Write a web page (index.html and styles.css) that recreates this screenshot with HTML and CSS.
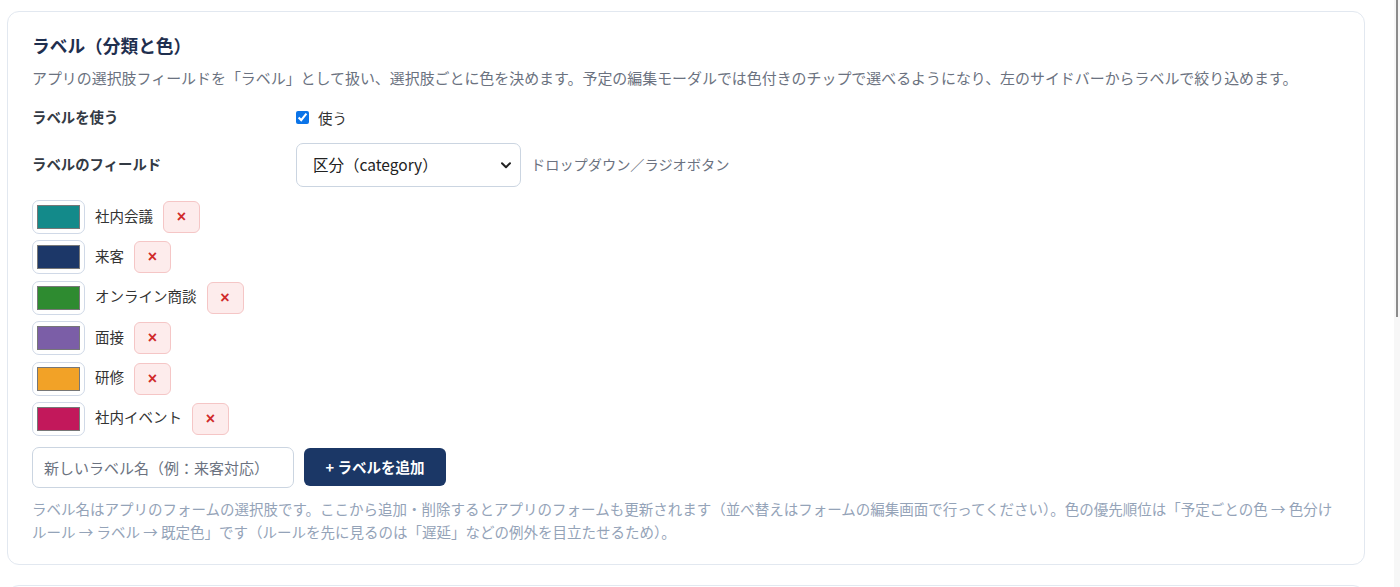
FILE: index.html
```html
<!DOCTYPE html>
<html lang="ja">
<head>
<meta charset="utf-8">
<title>ラベル（分類と色）</title>
<link rel="stylesheet" href="styles.css">
</head>
<body>
<div class="page">
  <main class="content">
    <section class="card">
      <h2 class="card-title">ラベル（分類と色）</h2>
      <p class="card-desc">アプリの選択肢フィールドを「ラベル」として扱い、選択肢ごとに色を決めます。予定の編集モーダルでは色付きのチップで選べるようになり、左のサイドバーからラベルで絞り込めます。</p>

      <div class="field-row row-use">
        <span class="field-label">ラベルを使う</span>
        <label class="check">
          <input type="checkbox" checked>
          <span>使う</span>
        </label>
      </div>

      <div class="field-row row-field">
        <span class="field-label">ラベルのフィールド</span>
        <div class="field-control">
          <div class="select">
            <span>区分（category）</span>
            <svg class="chevron" width="10" height="7" viewBox="0 0 10 7"><path d="M1 1.2 L5 5.2 L9 1.2" fill="none" stroke="#222" stroke-width="2" stroke-linecap="round" stroke-linejoin="round"/></svg>
          </div>
          <span class="hint">ドロップダウン／ラジオボタン</span>
        </div>
      </div>

      <ul class="label-list">
        <li class="label-item">
          <span class="swatch"><span class="swatch-color c-teal"></span></span>
          <span class="label-name">社内会議</span>
          <button class="remove" type="button">×</button>
        </li>
        <li class="label-item">
          <span class="swatch"><span class="swatch-color c-navy"></span></span>
          <span class="label-name">来客</span>
          <button class="remove" type="button">×</button>
        </li>
        <li class="label-item">
          <span class="swatch"><span class="swatch-color c-green"></span></span>
          <span class="label-name">オンライン商談</span>
          <button class="remove" type="button">×</button>
        </li>
        <li class="label-item">
          <span class="swatch"><span class="swatch-color c-purple"></span></span>
          <span class="label-name">面接</span>
          <button class="remove" type="button">×</button>
        </li>
        <li class="label-item">
          <span class="swatch"><span class="swatch-color c-orange"></span></span>
          <span class="label-name">研修</span>
          <button class="remove" type="button">×</button>
        </li>
        <li class="label-item">
          <span class="swatch"><span class="swatch-color c-crimson"></span></span>
          <span class="label-name">社内イベント</span>
          <button class="remove" type="button">×</button>
        </li>
      </ul>

      <div class="add-row">
        <input class="new-label" type="text" placeholder="新しいラベル名（例：来客対応）">
        <button class="add-btn" type="button">+ ラベルを追加</button>
      </div>

      <p class="note">ラベル名はアプリのフォームの選択肢です。ここから追加・削除するとアプリのフォームも更新されます（並べ替えはフォームの編集画面で行ってください）。色の優先順位は「予定ごとの色 → 色分けルール → ラベル → 既定色」です（ルールを先に見るのは「遅延」などの例外を目立たせるため）。</p>
    </section>

    <section class="card card-next"></section>
  </main>
  <div class="scrollbar"><div class="thumb"></div></div>
</div>
</body>
</html>
```

FILE: styles.css
```css
html, body {
  margin: 0;
  padding: 0;
  height: 587px;
  overflow: hidden;
  background: #ffffff;
}

body {
  font-family: "Noto Sans CJK JP", "Noto Sans", sans-serif;
  color: #333333;
}

.page {
  display: flex;
  height: 587px;
}

.content {
  flex: 1;
  padding: 11px 29px 0 7px;
  display: flex;
  flex-direction: column;
  gap: 20px;
  min-width: 0;
}

.card {
  border: 1px solid #e2e8f0;
  border-radius: 12px;
  background: #ffffff;
  padding: 21px 24px 21px 24px;
}

.card-next {
  height: 200px;
  flex-shrink: 0;
}

.card-title {
  margin: 0;
  font-size: 17.7px;
  line-height: 24px;
  font-weight: 700;
  color: #1f2f4f;
}

.card-desc {
  margin: 10px 0 0;
  font-size: 14.95px;
  line-height: 22px;
  color: #6b7280;
  white-space: nowrap;
}

.field-row {
  display: grid;
  grid-template-columns: 264px 1fr;
  align-items: center;
}

.row-use {
  margin-top: 16px;
  height: 24px;
}

.row-field {
  margin-top: 14px;
  height: 44px;
}

.field-label {
  font-size: 14.4px;
  font-weight: 700;
  color: #333a44;
  line-height: 22px;
}

.row-field .field-label {
  padding-bottom: 3px;
}

.check {
  display: flex;
  align-items: center;
  gap: 9px;
  font-size: 14.5px;
  color: #333333;
}

.check input {
  margin: 0;
  width: 13px;
  height: 13px;
  accent-color: #0b74e8;
}

.field-control {
  display: flex;
  align-items: center;
  gap: 10px;
}

.select {
  box-sizing: border-box;
  width: 225px;
  height: 44px;
  border: 1px solid #cbd5e1;
  border-radius: 7px;
  padding: 0 9px 3px 16px;
  display: flex;
  align-items: center;
  justify-content: space-between;
  font-size: 15.5px;
  color: #222222;
  background: #ffffff;
}

.chevron {
  display: block;
  margin-top: 3px;
}

.hint {
  font-size: 14.2px;
  color: #6b7280;
  padding-bottom: 3px;
}

.label-list {
  list-style: none;
  margin: 13px 0 0;
  padding: 0;
  display: flex;
  flex-direction: column;
  gap: 6.4px;
}

.label-item {
  display: flex;
  align-items: center;
  gap: 10px;
  height: 34px;
}

.swatch {
  box-sizing: border-box;
  width: 53px;
  height: 34px;
  border: 1.5px solid #d0d9e7;
  border-radius: 7px;
  padding: 4px 4px;
  display: flex;
  background: #ffffff;
}

.swatch-color {
  flex: 1;
  border: 1px solid #777777;
}

.c-teal { background: #138a8a; }
.c-navy { background: #1c3768; }
.c-green { background: #2e8b30; }
.c-purple { background: #7b5ea7; }
.c-orange { background: #f2a227; }
.c-crimson { background: #c2185b; }

.label-name {
  font-size: 14.5px;
  color: #333333;
  padding-bottom: 4px;
}

.remove {
  box-sizing: border-box;
  width: 37px;
  height: 32px;
  border: 1px solid #f5c6c6;
  border-radius: 6px;
  background: #fdecec;
  color: #d02a2a;
  font-family: "Liberation Sans", sans-serif;
  font-size: 16px;
  font-weight: 700;
  line-height: 1;
  padding: 0;
  display: flex;
  align-items: center;
  justify-content: center;
}

.add-row {
  margin-top: 11px;
  display: flex;
  align-items: center;
  gap: 10px;
}

.new-label {
  box-sizing: border-box;
  width: 262px;
  height: 41px;
  border: 1px solid #cbd5e1;
  border-radius: 7px;
  padding: 0 11px;
  font-family: "Noto Sans CJK JP", "Noto Sans", sans-serif;
  font-size: 15px;
  color: #333333;
  margin: 0;
  outline: none;
}

.new-label::placeholder {
  color: #6b7280;
}

.add-btn {
  box-sizing: border-box;
  width: 142px;
  height: 38px;
  border: none;
  border-radius: 6px;
  background: #1b3766;
  color: #ffffff;
  font-family: "Noto Sans CJK JP", "Noto Sans", sans-serif;
  font-size: 14.5px;
  font-weight: 700;
  padding: 0 0 2px;
}

.note {
  margin: 9px 0 0;
  font-size: 14.5px;
  line-height: 23px;
  color: #94a3b8;
}

.scrollbar {
  width: 6px;
  flex-shrink: 0;
  background: #f7f7f7;
  display: flex;
}

.thumb {
  margin-left: 2px;
  width: 2px;
  height: 317px;
  background: #8c8c8c;
}
```
